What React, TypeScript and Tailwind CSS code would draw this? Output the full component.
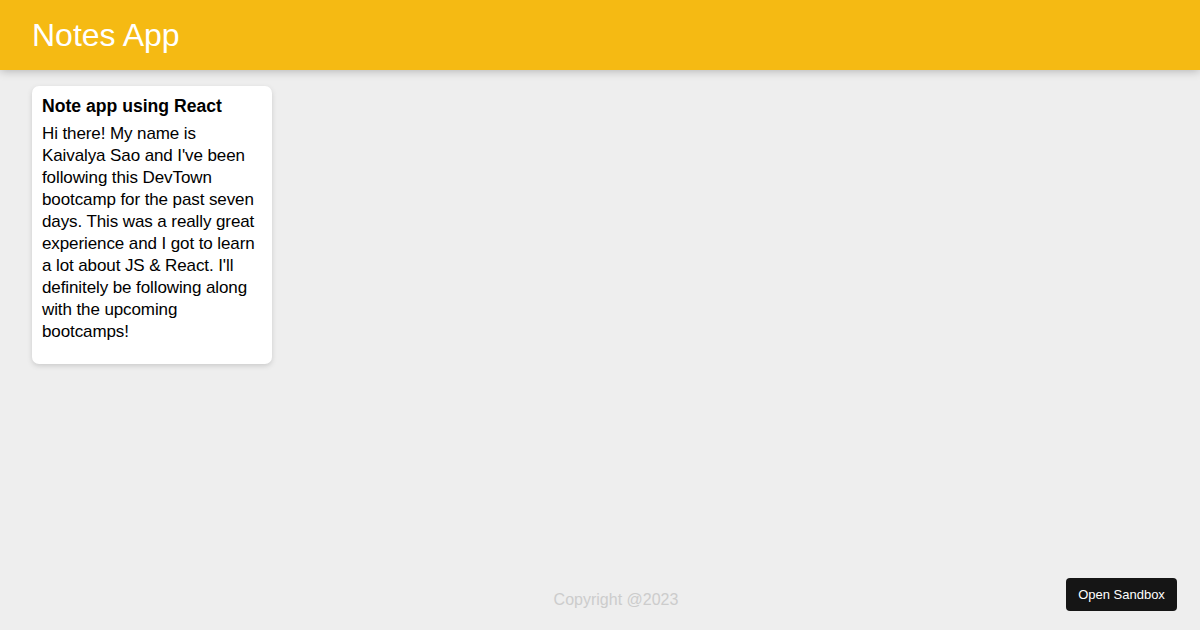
export default function App() {
  return (
    <div className="relative min-h-[630px] bg-[#eeeeee] px-4 font-['Liberation_Sans',Arial,sans-serif]">
      {/* header */}
      <header className="-mx-4 flex h-[70px] items-center bg-[#f5ba13] px-8 shadow-[0_0_10px_0_rgba(0,0,0,0.3)]">
        <h1 className="text-[32px] font-extralight leading-none text-white">Notes App</h1>
      </header>

      {/* notes */}
      <div className="flex flex-wrap">
        <div className="m-4 w-[240px] rounded-[7px] bg-white p-[10px] shadow-[0_2px_5px_#ccc]">
          <h2 className="mb-[6px] text-[17.6px] font-bold leading-[21px] text-black">Note app using React</h2>
          <p className="mb-[11px] text-[17px] leading-[22px] tracking-[-0.1px] text-black">
            Hi there! My name is Kaivalya Sao and I've been following this DevTown bootcamp for the past seven days. This
            was a really great experience and I got to learn a lot about JS &amp; React. I'll definitely be following
            along with the upcoming bootcamps!
          </p>
        </div>
      </div>

      {/* footer */}
      <footer className="absolute bottom-0 left-4 h-10 w-full text-center">
        <p className="text-base leading-[20px] text-[#cccccc]">Copyright @2023</p>
      </footer>

      <button className="absolute bottom-[19px] right-[23px] h-[33px] w-[111px] rounded bg-[#151515] text-[13px] text-white">
        Open Sandbox
      </button>
    </div>
  );
}
